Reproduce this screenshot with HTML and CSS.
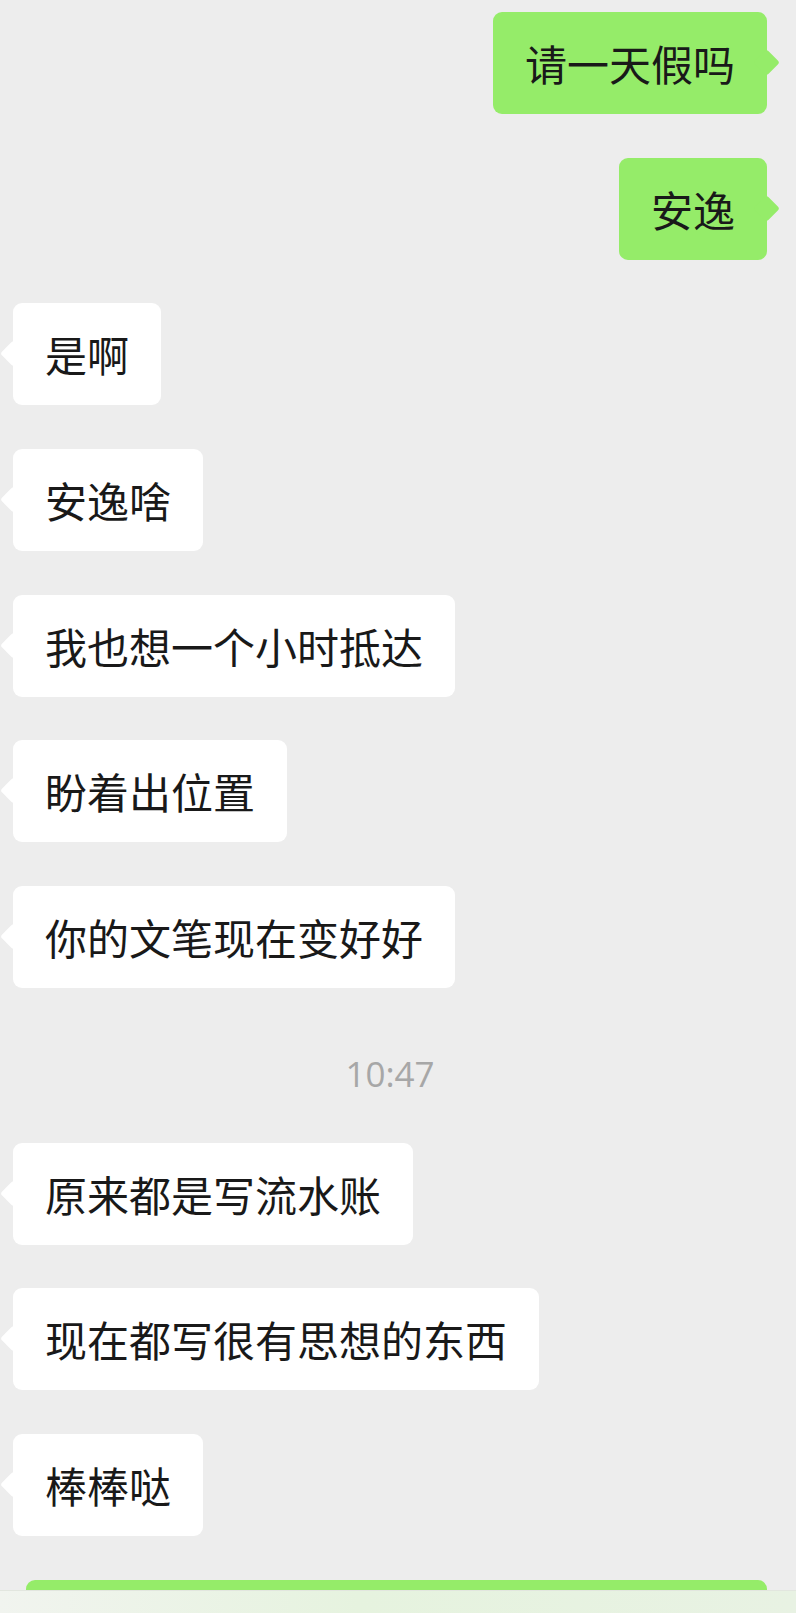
FILE: index.html
```html
<!DOCTYPE html>
<html lang="zh-CN">
<head>
    <meta charset="UTF-8">
    <meta name="viewport" content="width=device-width, initial-scale=1.0">
    <title>聊天</title>
    <link rel="stylesheet" href="styles.css">
</head>
<body>

    <div class="chat">
        <div class="row mine"><div class="bubble">请一天假吗</div></div>
        <div class="row mine"><div class="bubble">安逸</div></div>
        <div class="row theirs"><div class="bubble">是啊</div></div>
        <div class="row theirs"><div class="bubble">安逸啥</div></div>
        <div class="row theirs"><div class="bubble">我也想一个小时抵达</div></div>
        <div class="row theirs"><div class="bubble">盼着出位置</div></div>
        <div class="row theirs"><div class="bubble">你的文笔现在变好好</div></div>

        <!-- Time divider -->
        <div class="time">10:47</div>

        <div class="row theirs"><div class="bubble">原来都是写流水账</div></div>
        <div class="row theirs"><div class="bubble">现在都写很有思想的东西</div></div>
        <div class="row theirs"><div class="bubble">棒棒哒</div></div>
        <div class="row mine"><div class="bubble wide"></div></div>
    </div>

    <!-- Input bar, only its top edge shows -->
    <div class="input-bar"></div>

</body>
</html>
```

FILE: styles.css
```css
html {
    overflow: hidden;
}
body {
    margin: 0;
    height: 1613px;
    background-color: #ededed;
    font-family: "Noto Sans CJK SC", "Noto Sans", sans-serif;
    color: #191919;
}
.chat {
    display: flex;
    flex-direction: column;
    gap: 43.7px;
    padding-top: 12px;
}
.row {
    display: flex;
}
.row.mine {
    justify-content: flex-end;
    padding-right: 29px;
}
.row.theirs {
    justify-content: flex-start;
    padding-left: 13px;
}
.bubble {
    position: relative;
    height: 102px;
    box-sizing: border-box;
    padding: 0 32px;
    border-radius: 9px;
    font-size: 42px;
    line-height: 102px;
    white-space: nowrap;
}
.bubble::before {
    content: "";
    position: absolute;
    top: 41px;
    width: 19px;
    height: 19px;
    border-radius: 3px;
    transform: rotate(45deg);
}
.mine .bubble {
    background-color: #95ec69;
}
.mine .bubble::before {
    right: -9px;
    background-color: #95ec69;
}
.theirs .bubble {
    background-color: #ffffff;
}
.theirs .bubble::before {
    left: -9px;
    background-color: #ffffff;
}
.bubble.wide {
    width: 741px;
}
.time {
    height: 40px;
    line-height: 40px;
    margin: 22px 0 5px;
    padding-right: 16px;
    text-align: center;
    font-family: "Open Sans", "Noto Sans", sans-serif;
    font-size: 35px;
    color: #a7a7a7;
}
.input-bar {
    position: fixed;
    left: 0;
    right: 0;
    bottom: 0;
    height: 22px;
    background: linear-gradient(to right, #f1f4ef, #e6f3df 45%, #e8f2e3);
    border-top: 1px solid #e2e6df;
}
```
